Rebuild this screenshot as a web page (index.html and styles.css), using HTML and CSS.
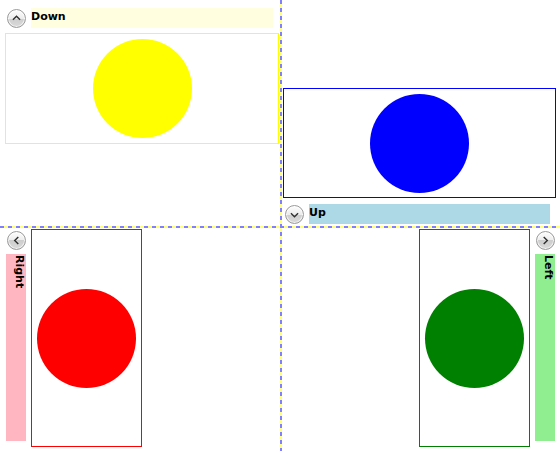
FILE: index.html
```html
<!DOCTYPE html>
<html>
<head>
<meta charset="utf-8">
<link rel="stylesheet" href="styles.css">
</head>
<body>
<div class="grid">
  <div class="cell tl">
    <div class="hdr">
      <div class="toggle"><svg width="19" height="19" viewBox="0 0 19 19"><polyline points="5.5,11 9.5,7 13.5,11" class="chev"/></svg></div>
      <div class="bar bar-down">Down</div>
    </div>
    <div class="box box-yellow"><div class="dot dot-yellow"></div></div>
  </div>
  <div class="vline"></div>
  <div class="cell tr">
    <div class="box box-blue"><div class="dot dot-blue"></div></div>
    <div class="hdr hdr-up">
      <div class="toggle"><svg width="19" height="19" viewBox="0 0 19 19"><polyline points="5.5,8 9.5,12 13.5,8" class="chev"/></svg></div>
      <div class="bar bar-up">Up</div>
    </div>
  </div>
  <div class="hline"></div>
  <div class="cell bl">
    <div class="side">
      <div class="toggle"><svg width="19" height="19" viewBox="0 0 19 19"><polyline points="11.5,5.5 7.5,9.5 11.5,13.5" class="chev"/></svg></div>
      <div class="vbar vbar-right">Right</div>
    </div>
    <div class="box box-red"><div class="dot dot-red"></div></div>
  </div>
  <div class="cell br">
    <div class="box box-green"><div class="dot dot-green"></div></div>
    <div class="side">
      <div class="toggle"><svg width="19" height="19" viewBox="0 0 19 19"><polyline points="7.5,5.5 11.5,9.5 7.5,13.5" class="chev"/></svg></div>
      <div class="vbar vbar-left">Left</div>
    </div>
  </div>
</div>
</body>
</html>
```
FILE: styles.css
```css
html, body {
  margin: 0;
  padding: 0;
  background: #ffffff;
}
body {
  font-family: "DejaVu Sans", sans-serif;
  font-size: 11px;
  font-weight: bold;
  color: #000;
}
.grid {
  width: 560px;
  height: 451px;
  display: grid;
  grid-template-columns: 280px 2px 278px;
  grid-template-rows: 226px 2px 223px;
  overflow: hidden;
}
.vline {
  grid-column: 2;
  grid-row: 1 / 4;
  background: repeating-linear-gradient(to bottom, #8080ff 0 4px, #ffff80 4px 8px);
}
.hline {
  grid-column: 1 / 4;
  grid-row: 2;
  background: repeating-linear-gradient(to right, #8080ff 0 4px, #ffff80 4px 8px);
}
.tl { grid-column: 1; grid-row: 1; padding: 8px 0 0 5px; }
.tr { grid-column: 3; grid-row: 1; padding: 88px 0 0 1px; }
.bl { grid-column: 1; grid-row: 3; padding: 1px 0 0 6px; display: flex; align-items: flex-start; }
.br { grid-column: 3; grid-row: 3; padding: 1px 5px 0 0; display: flex; justify-content: flex-end; align-items: flex-start; }

.hdr {
  display: flex;
  align-items: center;
  gap: 5px;
  margin-left: 1px;
  height: 20px;
}
.hdr-up { margin-top: 6px; }

.toggle {
  width: 20px;
  height: 20px;
  flex: none;
  display: flex;
  align-items: center;
  justify-content: center;
}
.toggle svg {
  width: 19px;
  height: 19px;
  box-sizing: border-box;
  border-radius: 50%;
  border: 1px solid #9a9a9a;
  background: linear-gradient(to bottom, #fdfdfd 0%, #ececec 50%, #cdcdcd 50%, #dadada 100%);
  box-shadow: inset 0 0 0 1px rgba(255,255,255,0.7);
}
.chev {
  fill: none;
  stroke: #303030;
  stroke-width: 1.6;
}

.bar {
  height: 20px;
  line-height: 18px;
  flex: none;
}
.bar-down { width: 242px; background: #ffffe0; }
.bar-up { width: 241px; background: #add8e6; }

.box {
  box-sizing: border-box;
  display: flex;
  align-items: center;
  justify-content: center;
  flex: none;
}
.box-yellow { width: 274px; height: 111px; border: 1px solid #ffff00; margin-top: 5px; }
.box-blue { width: 273px; height: 110px; border: 1px solid #0000ff; }
.box-red { width: 111px; height: 218px; border: 1px solid #ff0000; margin-left: 5px; }
.box-green { width: 111px; height: 218px; border: 1px solid #008000; margin-right: 5px; }

.dot {
  width: 99px;
  height: 99px;
  border-radius: 50%;
  flex: none;
}
.dot-yellow { background: #ffff00; }
.dot-blue { background: #0000ff; }
.dot-red { background: #ff0000; }
.dot-green { background: #008000; }

.side {
  width: 20px;
  display: flex;
  flex-direction: column;
  flex: none;
  padding-top: 1px;
}
.vbar {
  width: 20px;
  height: 187px;
  margin-top: 4px;
  box-sizing: border-box;
  writing-mode: vertical-rl;
  line-height: 14px;
  padding-top: 1px;
}
.vbar-right { background: #ffb6c1; }
.vbar-left { background: #90ee90; }
```
